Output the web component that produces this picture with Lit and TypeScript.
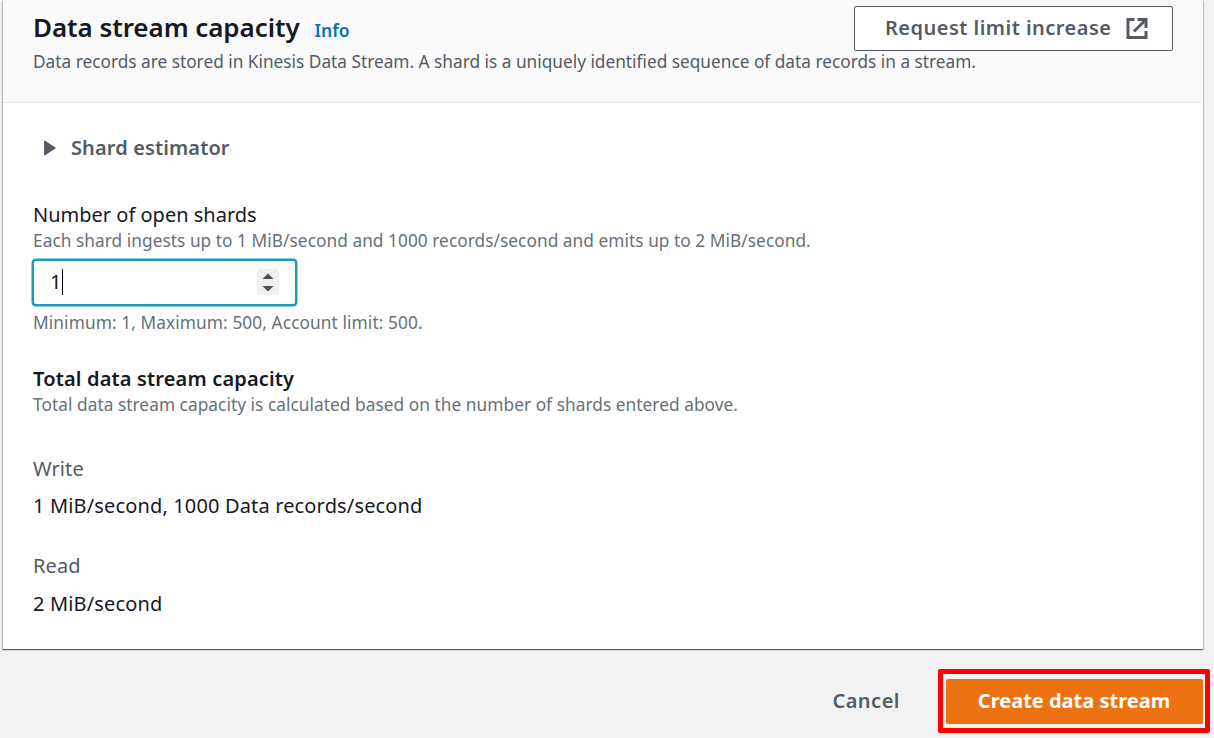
import { LitElement, html, css } from "lit";
import { customElement, property } from "lit/decorators.js";

@customElement("capacity-value")
export class CapacityValue extends LitElement {
  @property() label = "";
  @property() value = "";

  static styles = css`
    :host {
      display: block;
    }
    .label,
    .value {
      font-size: 20px;
      line-height: 28px;
      white-space: nowrap;
    }
    .label {
      color: #545b64;
      letter-spacing: 0.1px;
    }
    .value {
      margin-top: var(--value-gap, 9px);
      color: #16191f;
      letter-spacing: 0.15px;
    }
  `;

  render() {
    return html`
      <div class="label">${this.label}</div>
      <div class="value">${this.value}</div>
    `;
  }
}

@customElement("app-root")
export class AppRoot extends LitElement {
  static styles = css`
    :host {
      display: block;
      box-sizing: border-box;
      width: 100%;
      height: 738px;
      overflow: hidden;
      background: #f2f2f2;
      color: #16191f;
      font-family: "Noto Sans", "Open Sans", sans-serif;
      font-size: 20px;
    }
    .card {
      box-sizing: border-box;
      height: 649px;
      margin: 0 11px 0 3px;
      background: #fff;
      box-shadow:
        0 1px 1px rgba(0, 28, 36, 0.5),
        1px 1px 1px rgba(0, 28, 36, 0.15),
        -1px 1px 1px rgba(0, 28, 36, 0.2);
    }
    .header {
      box-sizing: border-box;
      height: 103px;
      padding: 6px 30px 0;
      background: #fafafa;
      border-bottom: 1px solid #eaeded;
    }
    .title-row {
      display: flex;
      justify-content: space-between;
      height: 45px;
    }
    .heading {
      display: flex;
      align-items: baseline;
      padding-top: 4px;
      line-height: 34px;
      white-space: nowrap;
    }
    .title {
      margin: 0;
      font-size: 26px;
      font-weight: 600;
      line-height: 34px;
      letter-spacing: -0.07px;
    }
    .info {
      margin-left: 15px;
      color: #0073bb;
      font-size: 17.5px;
      font-weight: 600;
      text-decoration: none;
    }
    .header-text {
      padding-top: 1px;
      color: #545b64;
      font-size: 17.25px;
      line-height: 20px;
      white-space: nowrap;
    }
    .button {
      box-sizing: border-box;
      display: flex;
      align-items: center;
      height: 45px;
      margin: 0;
      font-family: inherit;
      font-size: 20px;
      font-weight: 600;
      white-space: nowrap;
      border-radius: 2px;
    }
    .normal {
      width: 319px;
      padding: 0 23px 2px 30px;
      justify-content: space-between;
      color: #545b64;
      background: #fff;
      border: 1px solid #545b64;
      letter-spacing: 0.48px;
    }
    .external {
      width: 24px;
      height: 24px;
      margin-top: 1px;
    }
    .body {
      padding: 30px 30px 0;
    }
    .expander {
      display: flex;
      align-items: center;
      height: 28px;
      padding-left: 10px;
      gap: 14px;
      color: #545b64;
      font-weight: 600;
      letter-spacing: 0.12px;
    }
    .caret {
      width: 14px;
      height: 16px;
      margin-top: 2px;
    }
    .field-label {
      margin-top: 41px;
      line-height: 26px;
    }
    .hint {
      color: #687078;
      font-size: 17.3px;
      line-height: 26px;
      letter-spacing: 0.04px;
      white-space: nowrap;
    }
    .input {
      box-sizing: border-box;
      display: flex;
      align-items: center;
      width: 265px;
      height: 47px;
      margin: 5px 0 0 -1px;
      padding: 0 16px 1px;
      background: #fff;
      border: 2px solid #1a9bb8;
      border-radius: 4px;
      box-shadow: 0 0 0 0.5px #1a9bb8;
    }
    .input-value {
      line-height: 28px;
    }
    .cursor {
      width: 1px;
      height: 26px;
      margin-left: 1px;
      background: #000;
    }
    .spinner {
      width: 22px;
      height: 26px;
      margin-left: auto;
    }
    .constraint {
      margin-top: 5px;
      line-height: 24px;
      letter-spacing: 0.09px;
    }
    .subheading {
      margin: 31px 0 0;
      font-size: 20px;
      font-weight: 600;
      line-height: 26px;
      letter-spacing: 0.16px;
    }
    .write {
      margin-top: 37px;
    }
    .read {
      margin-top: 32px;
      --value-gap: 10px;
    }
    .footer {
      display: flex;
      justify-content: flex-end;
      align-items: center;
      padding: 20px 4px 0 0;
    }
    .link {
      margin-right: 38px;
      padding: 0 0 2px;
      color: #545b64;
      background: none;
      border: 0;
      letter-spacing: 0.5px;
    }
    .highlight {
      padding: 5px 2px 4px 3px;
      border: 5px solid #fe0000;
      border-radius: 2px;
    }
    .primary {
      width: 257px;
      justify-content: center;
      padding: 0 1px 3px 0;
      color: #fff;
      background: #ec7211;
      border: 0;
      font-weight: 700;
    }
  `;

  render() {
    return html`
      <section class="card">
        <header class="header">
          <div class="title-row">
            <div class="heading">
              <h2 class="title">Data stream capacity</h2>
              <a class="info">Info</a>
            </div>
            <button class="button normal">
              Request limit increase
              <svg class="external" viewBox="0 0 24 24" fill="none" stroke="#545b64" stroke-width="3">
                <path d="M9.5 3.5H3V21.5H21V15" />
                <path d="M12.5 3.5H21V12" />
                <path d="M20.5 4L9 15.5" />
              </svg>
            </button>
          </div>
          <div class="header-text">
            Data records are stored in Kinesis Data Stream. A shard is a uniquely identified sequence of data records in a stream.
          </div>
        </header>
        <div class="body">
          <div class="expander">
            <svg class="caret" viewBox="0 0 14 16">
              <path d="M1.8 1.3L12 8L1.8 14.7Z" fill="#545b64" stroke="#545b64" stroke-width="1.4" stroke-linejoin="round" />
            </svg>
            Shard estimator
          </div>
          <div class="field-label">Number of open shards</div>
          <div class="hint">
            Each shard ingests up to 1 MiB/second and 1000 records/second and emits up to 2 MiB/second.
          </div>
          <div class="input">
            <span class="input-value">1</span>
            <span class="cursor"></span>
            <svg class="spinner" viewBox="0 0 22 26">
              <rect width="22" height="26" fill="#f0f0f0" />
              <path d="M5.5 10L11 4.5L16.5 10Z M5.5 17L11 22.5L16.5 17Z" fill="#505050" />
            </svg>
          </div>
          <div class="hint constraint">Minimum: 1, Maximum: 500, Account limit: 500.</div>
          <h3 class="subheading">Total data stream capacity</h3>
          <div class="hint">
            Total data stream capacity is calculated based on the number of shards entered above.
          </div>
          <capacity-value
            class="write"
            label="Write"
            value="1 MiB/second, 1000 Data records/second"
          ></capacity-value>
          <capacity-value class="read" label="Read" value="2 MiB/second"></capacity-value>
        </div>
      </section>
      <footer class="footer">
        <button class="button link">Cancel</button>
        <div class="highlight">
          <button class="button primary">Create data stream</button>
        </div>
      </footer>
    `;
  }
}
